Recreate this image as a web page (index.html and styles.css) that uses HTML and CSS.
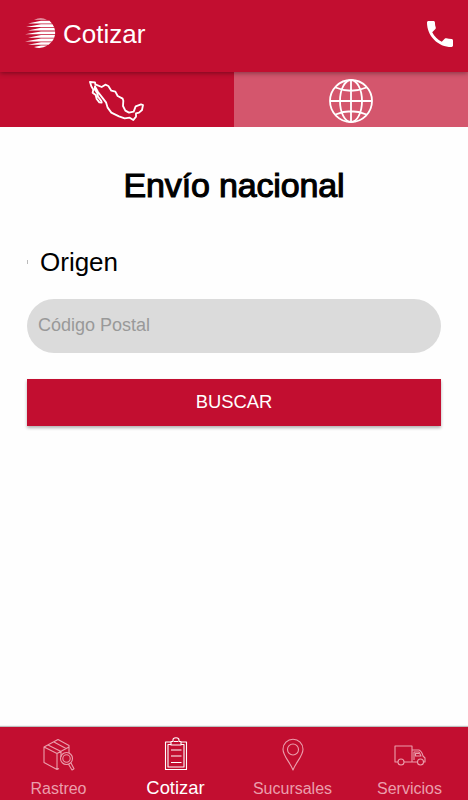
FILE: index.html
```html
<!DOCTYPE html>
<html lang="es">
<head>
    <meta charset="UTF-8">
    <meta name="viewport" content="width=device-width, initial-scale=1.0">
    <title>Cotizar</title>
    <link rel="stylesheet" href="styles.css">
</head>
<body>
    <header class="header">
        <svg class="logo" viewBox="0 0 32 32">
            <path d="M10 2.600Q17 .2 23 2.600zM4 6.400L17 3.800H25.500L28 6.400zM2 10L17 7.200H28.500L30 10zM4 13.600L17 10.800H30.300L31 13.600zM1 17.200L17 14.400H31.100V17.200zM4 20.800L17 18H31L30.200 20.800zM1 24.400L17 21.600H30L28 24.400zM4 27.800L17 25.200H27.400L24.500 27.800zM10 30L17 28.500H23.500Q17 32.500 10 30z"/>
        </svg>
        <h1 class="header-title">Cotizar</h1>
        <svg class="phone" viewBox="3 3 18 18">
            <path d="M6.620 10.790c1.440 2.830 3.760 5.140 6.590 6.590l2.200-2.200c.27-.27.67-.36 1.020-.24 1.120.37 2.330.57 3.570.57.55 0 1 .45 1 1V20c0 .55-.45 1-1 1C10.610 21 3 13.390 3 4c0-.55.45-1 1-1h3.500c.55 0 1 .45 1 1 0 1.250.2 2.450.57 3.570.11.35.03.74-.25 1.020z"/>
        </svg>
    </header>

    <nav class="segments">
        <button class="segment">
            <svg class="mexico" viewBox="28 34 168 126">
                <path d="M31 40L46 41L47 47L66 55L77 48L86 52L95 66L107 69L114 82L129 90L131 96L130 112L137 126L148 132L162 129L168 113L184 107L190 109L187 124L178 132L169 134L169 144L161 154L150 147L135 149L118 143L95 132L84 117L79 101L68 87L55 70L46 53L45 62L53 74L55 84L65 97L66 102L59 101L51 91L48 79L39 72L41 63L35 53z"/>
            </svg>
        </button>
        <button class="segment inactive">
            <svg class="globe" viewBox="0 0 44 44">
                <circle cx="22" cy="22" r="21"/>
                <ellipse cx="22" cy="22" rx="11" ry="21"/>
                <path d="M22 1v42M1 22h42M6.500 8.500Q22 15 37.500 8.500M6.500 35.500Q22 29 37.500 35.500"/>
            </svg>
        </button>
    </nav>

    <main class="content">
        <h2 class="title">Envío nacional</h2>
        <label class="label" for="cp">Origen</label>
        <input class="field" type="text" id="cp" placeholder="Código Postal">
        <button class="search">BUSCAR</button>
    </main>

    <nav class="tabs">
        <a class="tab">
            <svg viewBox="0 0 32 34">
                <path d="M16 30.500L14 31.500L1 24.500V9L15 1.500L26 7.500V15M1 9L14 15.500V31.500M14 15.500L26 9M5 7L18 13.500V19M11 4L23 10.500M14 15.500L18 13.500"/>
                <circle cx="23.500" cy="20.500" r="6"/>
                <circle cx="23.500" cy="20.500" r="3.700"/>
                <path d="M25.500 26.200L29 32L31 30.700L28 25"/>
            </svg>
            <span>Rastreo</span>
        </a>
        <a class="tab active">
            <svg viewBox="0 0 32 34">
                <path d="M11 4H5.500V31.500H26.500V4H21M11 6.500H8V29H24V6.500H21M11 7V3.500H13V2Q13 -.2 16 -.2T19 2V3.500H21V7zM14 3.500H18M11 12H21.500M11 18H21.500M11 24.500H21.500"/>
            </svg>
            <span>Cotizar</span>
        </a>
        <a class="tab">
            <svg viewBox="0 0 32 34">
                <path d="M16 32C13 24 6 18 6 11.200A10 10 0 0 1 26 11.200C26 18 19 24 16 32z"/>
                <circle cx="16" cy="11.500" r="5.500"/>
            </svg>
            <span>Sucursales</span>
        </a>
        <a class="tab">
            <svg viewBox="0 0 32 34">
                <path d="M4 24H1V8H18V24H10M18 12H25Q28 13.500 29 18L31 20V24H29.500M23.500 24H18M20 22V14H25L27 18H21.500V15.500H25"/>
                <circle cx="7" cy="24" r="3"/>
                <circle cx="26.500" cy="24" r="3"/>
            </svg>
            <span>Servicios</span>
        </a>
    </nav>
</body>
</html>
```

FILE: styles.css
```css
* {
    box-sizing: border-box;
}

body {
    margin: 0;
    height: 800px;
    display: flex;
    flex-direction: column;
    background: #fefefe;
    font-family: "Liberation Sans", Arial, sans-serif;
}

button {
    border: none;
    padding: 0;
    font-family: inherit;
    cursor: pointer;
}

.header {
    height: 72px;
    padding: 0 15px 4px 24px;
    display: flex;
    align-items: center;
    background: #c20e30;
    color: #fff;
    box-shadow: 0 1px 5px rgba(0, 0, 0, 0.4);
    z-index: 1;
}

.logo {
    width: 32px;
    height: 32px;
    margin-top: -2px;
    fill: #fff;
}

.header-title {
    margin: 0 auto 0 7px;
    font-size: 26px;
    font-weight: normal;
}

.phone {
    width: 26px;
    height: 26px;
    fill: #fff;
}

.segments {
    height: 55px;
    display: flex;
}

.segment {
    flex: 1;
    display: flex;
    align-items: center;
    justify-content: center;
    background: #c20e30;
}

.segment.inactive {
    background: #d4566d;
}

.segment svg {
    fill: none;
    stroke: #fff;
}

.mexico {
    width: 56px;
    height: 42px;
    margin-top: 2px;
    stroke-width: 5.5;
    stroke-linejoin: round;
}

.globe {
    width: 44px;
    height: 44px;
    margin-top: 3px;
    stroke-width: 1.8;
}

.content {
    flex: 1;
    padding: 38px 27px 0;
    display: flex;
    flex-direction: column;
}

.title {
    margin: 0;
    line-height: 40px;
    font-size: 34px;
    font-weight: normal;
    letter-spacing: -0.15px;
    text-align: center;
    color: #000;
    -webkit-text-stroke: 1.1px #000;
}

.label {
    margin: 42px 0 22px;
    display: flex;
    align-items: center;
    gap: 12px;
    line-height: 30px;
    font-size: 26px;
    color: #000;
}

.label::before {
    content: "";
    width: 1px;
    height: 4px;
    background: #bbb;
}

.field {
    height: 54px;
    padding: 0 11px 1px;
    border: none;
    border-radius: 27px;
    background: #dbdbdb;
    font-family: inherit;
    font-size: 18px;
}

.field::placeholder {
    color: #999;
}

.search {
    height: 47px;
    margin-top: 26px;
    padding-bottom: 2px;
    background: #c20e30;
    color: #fff;
    font-size: 18.400px;
    box-shadow: 0 2px 3px rgba(0, 0, 0, 0.3);
}

.tabs {
    height: 73px;
    display: flex;
    background: #c20e30;
    box-shadow: 0 -1px 1px rgba(0, 0, 0, 0.25);
}

.tab {
    flex: 1;
    padding-top: 11px;
    display: flex;
    flex-direction: column;
    align-items: center;
    color: #eb9eac;
    font-size: 16px;
}

.tab svg {
    width: 32px;
    height: 34px;
    overflow: visible;
    fill: none;
    stroke: currentColor;
    stroke-width: 1.1;
    stroke-linejoin: round;
}

.tab span {
    margin-top: 6px;
    line-height: 22px;
}

.tab.active {
    color: #fff;
    font-size: 18.400px;
}

.tab.active span {
    margin-top: 5px;
}
```
